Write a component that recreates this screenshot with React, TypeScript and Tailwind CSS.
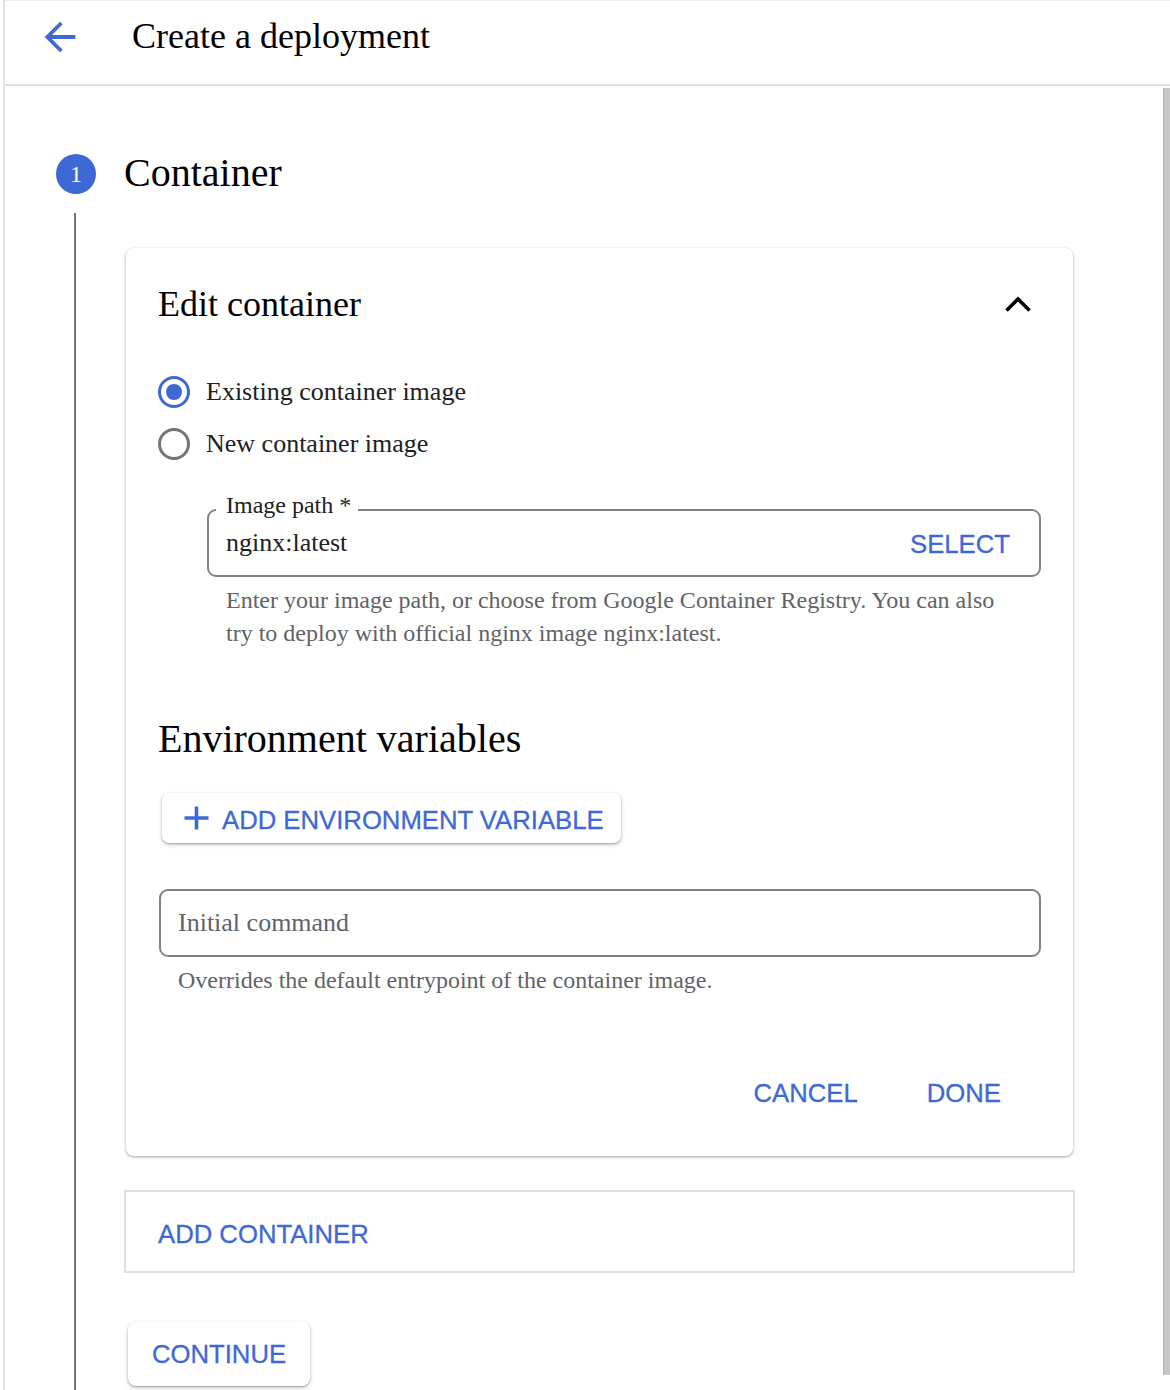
import React from "react";

function BackArrow() {
  return (
    <svg width="46" height="46" viewBox="0 0 24 24" className="shrink-0">
      <path
        fill="#3e69d5"
        d="M20 11H7.83l5.59-5.59L12 4l-8 8 8 8 1.41-1.41L7.83 13H20v-2z"
      />
    </svg>
  );
}

function ChevronUp() {
  return (
    <svg width="28" height="18" viewBox="0 0 28 18" className="mr-[9px] shrink-0">
      <path d="M2.5 15.5 L14 4 L25.5 15.5" fill="none" stroke="#000" strokeWidth="3.6" />
    </svg>
  );
}

function Plus() {
  return (
    <svg width="25" height="24" viewBox="0 0 25 24" className="shrink-0">
      <path d="M12.5 0.5 V23.5 M0.5 12 H24.5" fill="none" stroke="#3e69d5" strokeWidth="3.6" />
    </svg>
  );
}

export default function App() {
  return (
    <div className="relative w-[1170px] h-[1390px] overflow-hidden bg-white flex font-['Liberation_Serif',serif] text-[#202124]">
      <div className="w-[3px] shrink-0" />
      <div className="flex-1 min-w-0 border-l-2 border-[#e2e2e2] flex flex-col">
        {/* Header */}
        <header className="h-[86px] shrink-0 border-t border-t-[#efefef] border-b-2 border-b-[#e0e0e0] flex items-start pl-[32px]">
          <div className="mt-[13px]">
            <BackArrow />
          </div>
          <h1 className="ml-[49px] mt-[13px] text-[36px] leading-[44px] font-normal text-black">
            Create a deployment
          </h1>
        </header>

        {/* Content */}
        <div className="pl-[51px] pt-[63px] flex flex-col">
          {/* Step title */}
          <div className="flex items-start h-[48px]">
            <div className="mt-[5px] w-[40px] h-[40px] rounded-full bg-[#3e69d5] flex items-center justify-center text-white text-[24px] leading-none">
              1
            </div>
            <div className="ml-[28px] text-[40px] leading-[48px] text-black">Container</div>
          </div>

          <div className="flex">
            {/* step line */}
            <div className="w-[40px] shrink-0 flex flex-col pt-[16px]">
              <div className="ml-[18px] w-[2px] flex-1 bg-[#757575]" />
            </div>

            {/* step body */}
            <div className="ml-[28px] pt-[51px] pb-[120px] flex flex-col">
              {/* Card */}
              <div className="ml-[2px] w-[947px] rounded-[8px] bg-white shadow-[0_1px_2px_rgba(60,64,67,0.3),0_1px_3px_1px_rgba(60,64,67,0.15)] px-[32px] pt-[34px] pb-[39px] flex flex-col">
                <div className="flex items-center justify-between h-[44px]">
                  <h2 className="text-[36px] leading-[44px] font-normal text-black">Edit container</h2>
                  <ChevronUp />
                </div>

                {/* Radios */}
                <div className="mt-[50px] flex flex-col gap-[20px]">
                  <label className="flex items-center h-[32px]">
                    <span className="w-[32px] h-[32px] rounded-full border-[3px] border-[#3e69d5] flex items-center justify-center">
                      <span className="w-[16px] h-[16px] rounded-full bg-[#3e69d5]" />
                    </span>
                    <span className="ml-[16px] text-[26px] leading-[32px]">Existing container image</span>
                  </label>
                  <label className="flex items-center h-[32px]">
                    <span className="w-[32px] h-[32px] rounded-full border-[3px] border-[#757575]" />
                    <span className="ml-[16px] text-[26px] leading-[32px]">New container image</span>
                  </label>
                </div>

                {/* Image path field */}
                <div className="mt-[49px] ml-[49px] relative h-[68px] border-2 border-[#7f8388] rounded-[9px] flex items-center pl-[17px] pr-[29px]">
                  <span className="absolute top-[-20px] left-[7px] bg-white pl-[10px] pr-[7px] text-[24px] leading-[28px]">
                    Image path *
                  </span>
                  <span className="flex-1 text-[26px] leading-[32px]">nginx:latest</span>
                  <span className="font-['Liberation_Sans',Arial,sans-serif] text-[25.7px] leading-[30px] text-[#3e69d5] [-webkit-text-stroke:0.3px] pt-[1px]">
                    SELECT
                  </span>
                </div>
                <p className="mt-[7px] ml-[49px] pl-[19px] text-[24px] leading-[33px] text-[#5f6368]">
                  Enter your image path, or choose from Google Container Registry. You can also
                  <br />
                  try to deploy with official nginx image nginx:latest.
                </p>

                {/* Environment variables */}
                <h3 className="mt-[65px] text-[40px] leading-[48px] font-normal text-black">Environment variables</h3>
                <button className="mt-[30px] ml-[4px] self-start h-[50px] rounded-[7px] bg-white shadow-[0_1px_2px_rgba(0,0,0,0.3),0_2px_5px_rgba(0,0,0,0.15)] pl-[22px] pr-[17px] flex items-center gap-[13px]">
                  <Plus />
                  <span className="font-['Liberation_Sans',Arial,sans-serif] text-[25.7px] leading-[30px] text-[#3e69d5] [-webkit-text-stroke:0.3px] pt-[3px]">
                    ADD ENVIRONMENT VARIABLE
                  </span>
                </button>

                {/* Initial command */}
                <div className="mt-[46px] ml-[1px] h-[68px] border-2 border-[#7f8388] rounded-[9px] flex items-center pl-[17px]">
                  <span className="text-[26px] leading-[32px] text-[#5f6368]">Initial command</span>
                </div>
                <p className="mt-[7px] pl-[20px] text-[24px] leading-[33px] text-[#5f6368]">
                  Overrides the default entrypoint of the container image.
                </p>

                {/* Actions */}
                <div className="mt-[72px] h-[48px] flex items-center justify-end gap-[69px] pr-[40px] font-['Liberation_Sans',Arial,sans-serif] text-[25.7px] leading-[30px] text-[#3e69d5] [-webkit-text-stroke:0.3px]">
                  <span>CANCEL</span>
                  <span>DONE</span>
                </div>
              </div>

              {/* Add container */}
              <div className="mt-[34px] w-[951px] h-[83px] border-2 border-[#e0e0e0] flex items-center pl-[32px] pt-[4px]">
                <span className="font-['Liberation_Sans',Arial,sans-serif] text-[25.7px] leading-[30px] text-[#3e69d5] [-webkit-text-stroke:0.3px]">
                  ADD CONTAINER
                </span>
              </div>

              {/* Continue */}
              <button className="mt-[49px] ml-[4px] w-[182px] h-[64px] rounded-[8px] bg-white shadow-[0_1px_2px_rgba(0,0,0,0.3),0_2px_5px_rgba(0,0,0,0.15)] flex items-center justify-center">
                <span className="font-['Liberation_Sans',Arial,sans-serif] text-[25.7px] leading-[30px] text-[#3e69d5] [-webkit-text-stroke:0.3px]">
                  CONTINUE
                </span>
              </button>
            </div>
          </div>
        </div>
      </div>

      {/* Scrollbar */}
      <div className="absolute right-0 top-[88px] w-[7px] h-[1287px] bg-[#c8c8c8] border-l border-[#b0b0b0]" />
    </div>
  );
}
